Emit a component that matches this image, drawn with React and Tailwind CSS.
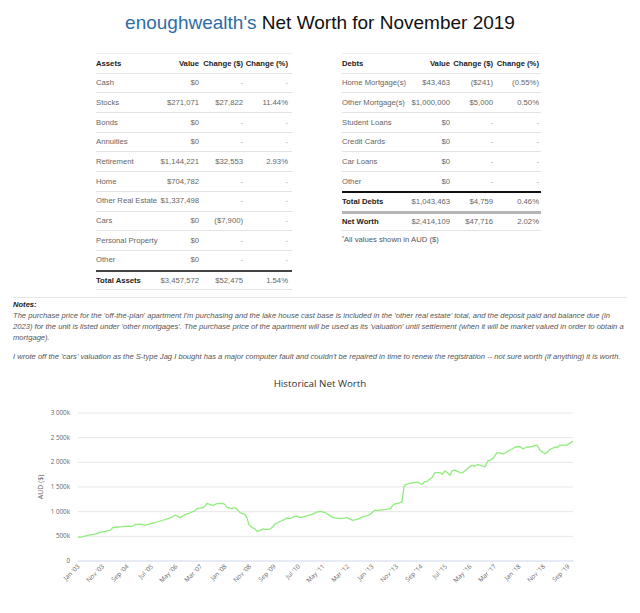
import React from 'react'

const assets = [
  ['Cash', '$0', '-', '-'],
  ['Stocks', '$271,071', '$27,822', '11.44%'],
  ['Bonds', '$0', '-', '-'],
  ['Annuities', '$0', '-', '-'],
  ['Retirement', '$1,144,221', '$32,553', '2.93%'],
  ['Home', '$704,782', '-', '-'],
  ['Other Real Estate', '$1,337,498', '-', '-'],
  ['Cars', '$0', '($7,900)', '-'],
  ['Personal Property', '$0', '-', '-'],
  ['Other', '$0', '-', '-'],
]

const debts = [
  ['Home Mortgage(s)', '$43,463', '($241)', '(0.55%)'],
  ['Other Mortgage(s)', '$1,000,000', '$5,000', '0.50%'],
  ['Student Loans', '$0', '-', '-'],
  ['Credit Cards', '$0', '-', '-'],
  ['Car Loans', '$0', '-', '-'],
  ['Other', '$0', '-', '-'],
]

// [page x, value in k]
const history = [
  [78, 480], [82, 490], [86, 510], [90, 530], [95, 545], [100, 585], [105, 600], [110, 620],
  [113, 680], [118, 690], [123, 695], [128, 705], [132, 700], [135, 740], [140, 745], [145, 725],
  [150, 755], [155, 780], [160, 810], [165, 840], [170, 875], [173, 900], [175, 930], [178, 905],
  [180, 880], [185, 940], [190, 975], [194, 1010], [197, 1060], [203, 1080], [205, 1110], [207, 1170],
  [210, 1145], [213, 1130], [217, 1165], [222, 1170], [225, 1150], [227, 1085], [230, 1075], [232, 1060],
  [235, 1080], [238, 1030], [240, 980], [245, 945], [247, 870], [249, 740], [252, 680], [255, 650],
  [257, 600], [260, 620], [263, 650], [265, 640], [270, 645], [273, 700], [275, 750], [280, 800],
  [284, 840], [287, 875], [290, 855], [294, 900], [297, 910], [300, 880], [305, 905], [310, 930],
  [313, 955], [317, 990], [320, 1005], [325, 980], [330, 920], [333, 880], [337, 870], [340, 860],
  [344, 870], [347, 880], [350, 850], [353, 825], [358, 850], [363, 900], [367, 920], [370, 945],
  [373, 1000], [375, 1030], [378, 1020], [380, 1030], [385, 1040], [390, 1060], [393, 1130], [395, 1160],
  [398, 1170], [402, 1200], [404, 1500], [405, 1540], [410, 1575], [414, 1590], [418, 1600], [420, 1570],
  [422, 1555], [425, 1610], [427, 1615], [430, 1660], [432, 1690], [435, 1790], [440, 1790], [442, 1760],
  [445, 1825], [448, 1780], [450, 1735], [452, 1830], [455, 1840], [457, 1820], [460, 1790], [462, 1785],
  [465, 1830], [467, 1860], [470, 1920], [472, 1940], [475, 1920], [478, 1960], [482, 1930], [485, 1910],
  [488, 2030], [490, 2045], [493, 2080], [497, 2195], [500, 2185], [503, 2170], [506, 2200], [508, 2230],
  [512, 2270], [515, 2310], [520, 2320], [523, 2275], [527, 2310], [530, 2310], [533, 2330], [537, 2350],
  [540, 2245], [543, 2200], [545, 2175], [548, 2220], [550, 2265], [553, 2290], [555, 2310], [557, 2300],
  [560, 2350], [563, 2350], [567, 2345], [570, 2390], [573, 2430],
]

const xLabels = [
  "Jan '03", "Nov '03", "Sep '04", "Jul '05", "May '06", "Mar '07", "Jan '08", "Nov '08", "Sep '09",
  "Jul '10", "May '11", "Mar '12", "Jan '13", "Nov '13", "Sep '14", "Jul '15", "May '16", "Mar '17",
  "Jan '18", "Nov '18", "Sep '19",
]

const yTicks = [
  [0, '0'], [500, '500k'], [1000, '1 000k'], [1500, '1 500k'],
  [2000, '2 000k'], [2500, '2 500k'], [3000, '3 000k'],
]

// svg top sits at page y 400; zero line at page y 560
const yOf = (v) => 160 - (v * 148) / 3000

function Cell({ children }) {
  return (
    <div className={`text-right whitespace-nowrap ${children === '-' ? 'text-[#aaa]' : 'text-[#666]'}`}>
      {children}
    </div>
  )
}

function Row({ cols, cells, border = 'border-t border-[#e3e3e3]', bold }) {
  return (
    <div className={`grid ${cols} items-center h-[19.7px] ${border}`}>
      <div className={`whitespace-nowrap ${bold ? 'font-bold text-[#222]' : 'text-[#666]'}`}>{cells[0]}</div>
      <Cell>{cells[1]}</Cell>
      <Cell>{cells[2]}</Cell>
      <Cell>{cells[3]}</Cell>
    </div>
  )
}

function Header({ cols, title }) {
  return (
    <div className={`grid ${cols} items-center h-[19.7px] border-t border-[#eee] font-bold text-[#222] whitespace-nowrap`}>
      <div>{title}</div>
      <div className="text-right">Value</div>
      <div className="text-right">Change ($)</div>
      <div className="text-right">Change (%)</div>
    </div>
  )
}

function Chart() {
  const line = history.map(([x, v]) => `${x},${yOf(v).toFixed(1)}`).join(' ')
  return (
    <svg width="640" height="213" className="block" style={{ fontFamily: '"Open Sans", "DejaVu Sans", sans-serif' }}>
      {yTicks.map(([v, label]) => (
        <g key={v}>
          <line x1="78" x2="573" y1={yOf(v)} y2={yOf(v)} stroke={v === 0 ? '#ccd6eb' : '#e6e6e6'} strokeWidth="1" />
          <text x="70" y={yOf(v) + 2} textAnchor="end" fontSize="6.3" fill="#666">{label}</text>
        </g>
      ))}
      <text transform="translate(43,86) rotate(-90)" textAnchor="middle" fontSize="7" fill="#666">AUD ($)</text>
      <polyline points={line} fill="none" stroke="#90ed7d" strokeWidth="1.3" strokeLinejoin="round" />
      {xLabels.map((label, i) => {
        const x = 80 + i * 24.5
        return (
          <text key={label} transform={`translate(${x},166) rotate(-45)`} textAnchor="end" fontSize="6.3" fill="#666">
            {label}
          </text>
        )
      })}
    </svg>
  )
}

export default function App() {
  const leftCols = 'grid-cols-[62px_41px_44px_45px]'
  const rightCols = 'grid-cols-[63px_45px_43px_46px]'

  return (
    <div className="w-[640px] h-[613px] bg-white overflow-hidden" style={{ fontFamily: '"Liberation Sans", Arial, sans-serif' }}>
      {/* Title */}
      <h1 className="pt-[11px] h-[35px] text-center text-[19px] leading-[24px] text-[#111]">
        <span className="text-[#2e6da4]">enoughwealth's</span> Net Worth for November 2019
      </h1>

      {/* Tables */}
      <div className="mt-[18px] flex text-[7.7px]">
        <div className="ml-[95px] w-[197px] pl-[1px]">
          <Header cols={leftCols} title="Assets" />
          {assets.map((r) => <Row key={r[0]} cols={leftCols} cells={r} />)}
          <Row cols={leftCols} cells={['Total Assets', '$3,457,572', '$52,475', '1.54%']} border="border-t-2 border-[#444]" bold />
          <div className="border-t border-[#e3e3e3]" />
        </div>

        <div className="ml-[49px] w-[200px] pl-[1px]">
          <Header cols={rightCols} title="Debts" />
          {debts.map((r) => <Row key={r[0]} cols={rightCols} cells={r} />)}
          <Row cols={rightCols} cells={['Total Debts', '$1,043,463', '$4,759', '0.46%']} border="border-t-2 border-[#111]" bold />
          <Row cols={rightCols} cells={['Net Worth', '$2,414,109', '$47,716', '2.02%']} border="border-t-[3px] border-[#b5b5b5]" bold />
          <div className="border-t border-[#e3e3e3]" />
          <p className="mt-[4px] text-[#555] leading-[10px]">
            <sup className="text-[5px]">*</sup>All values shown in AUD ($)
          </p>
        </div>
      </div>

      {/* Notes */}
      <div className="mt-[7px] mx-[13px] border-t border-[#e8e8e8] pt-[1px] text-[7.6px] leading-[11px] italic text-[#555]">
        <p className="font-bold text-[#222]">Notes:</p>
        <p>
          The purchase price for the 'off-the-plan' apartment I'm purchasing and the lake house cast base is included in the 'other real estate' total, and the deposit paid and balance due (in 2023) for the unit is listed under 'other mortgages'. The purchase price of the apartment will be used as its 'valuation' until settlement (when it will be market valued in order to obtain a mortgage).
        </p>
        <p className="mt-[8px]">
          I wrote off the 'cars' valuation as the S-type Jag I bought has a major computer fault and couldn't be repaired in time to renew the registration -- not sure worth (if anything) it is worth.
        </p>
      </div>

      {/* Chart */}
      <div className="mt-[15px] mb-[10px] text-center text-[9.8px] leading-[14px] text-[#333]" style={{ fontFamily: '"Open Sans", "DejaVu Sans", sans-serif' }}>
        Historical Net Worth
      </div>
      <Chart />
    </div>
  )
}
